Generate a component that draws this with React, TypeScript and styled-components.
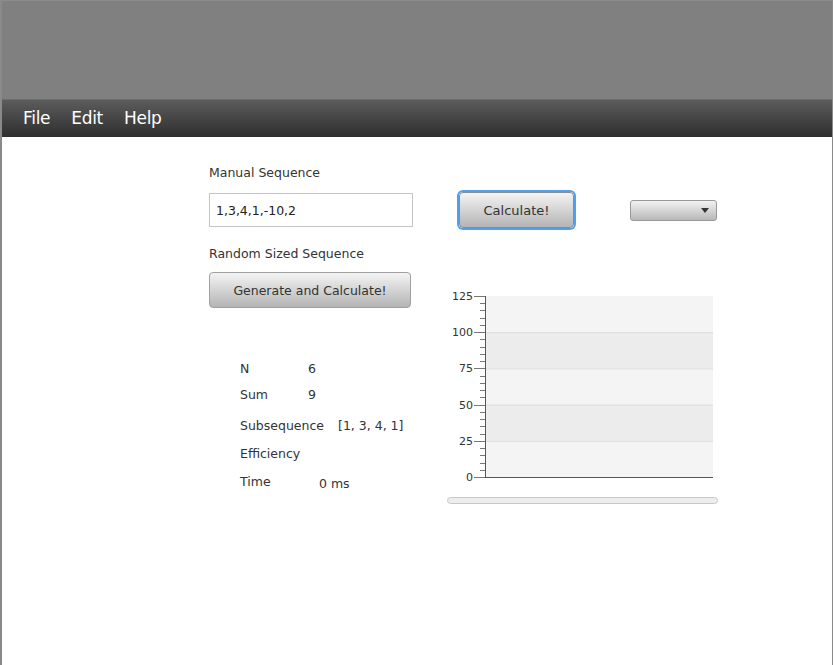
import styled, { createGlobalStyle } from "styled-components";

const GlobalStyle = createGlobalStyle`
  html, body {
    margin: 0;
    padding: 0;
    background: #fff;
  }
  body {
    font-family: "DejaVu Sans", "Liberation Sans", sans-serif;
  }
`;

const stats = [
  { label: "N", value: "6", labelWidth: 68, top: 53 },
  { label: "Sum", value: "9", labelWidth: 68, top: 10 },
  { label: "Subsequence", value: "[1, 3, 4, 1]", labelWidth: 98, top: 15 },
  { label: "Efficiency", value: "", labelWidth: 68, top: 12 },
  { label: "Time", value: "0 ms", labelWidth: 79, top: 12 },
];

const ticks = [125, 100, 75, 50, 25, 0];

export default function App() {
  return (
    <Window>
      <GlobalStyle />
      <TitleArea />
      <MenuBar>
        <MenuItem>File</MenuItem>
        <MenuItem>Edit</MenuItem>
        <MenuItem>Help</MenuItem>
      </MenuBar>
      <Content>
        <LeftColumn>
          <FieldLabel>Manual Sequence</FieldLabel>
          <SequenceInput defaultValue="1,3,4,1,-10,2" />
          <FieldLabel $top={19}>Random Sized Sequence</FieldLabel>
          <GenerateButton>Generate and Calculate!</GenerateButton>
          {stats.map((s) => (
            <StatRow key={s.label} $labelWidth={s.labelWidth} $top={s.top}>
              <span>{s.label}</span>
              <StatValue $shift={s.label === "Time" ? 2 : 0}>{s.value}</StatValue>
            </StatRow>
          ))}
        </LeftColumn>
        <RightColumn>
          <ActionRow>
            <CalcButton>Calculate!</CalcButton>
            <Dropdown>
              <svg width="8" height="5" viewBox="0 0 8 5">
                <path d="M0 0 H8 L4 5 Z" fill="#333" />
              </svg>
            </Dropdown>
          </ActionRow>
          <ChartSvg width="271" height="200" viewBox="0 0 271 200">
            {ticks.slice(0, -1).map((t, i) => (
              <rect
                key={t}
                x={38}
                y={8 + i * 36.2}
                width={228}
                height={36.2}
                fill={i % 2 === 0 ? "#f4f4f4" : "#ececec"}
              />
            ))}
            {ticks.slice(1, -1).map((t, i) => (
              <line
                key={t}
                x1={38}
                x2={266}
                y1={8 + (i + 1) * 36.2 + 0.5}
                y2={8 + (i + 1) * 36.2 + 0.5}
                stroke="#dcdcdc"
              />
            ))}
            {Array.from({ length: 26 }).map((_, i) => {
              const y = Math.round(8 + i * 7.24) + 0.5;
              const major = i % 5 === 0;
              return (
                <line
                  key={i}
                  x1={major ? 27 : 33}
                  x2={38}
                  y1={y}
                  y2={y}
                  stroke="#777"
                />
              );
            })}
            <line x1={38.5} x2={38.5} y1={8} y2={190} stroke="#555" />
            <line x1={38} x2={266} y1={189.5} y2={189.5} stroke="#555" />
            {ticks.map((t, i) => (
              <text
                key={t}
                x={26}
                y={8 + i * 36.2 + 4}
                textAnchor="end"
                fontSize="11"
                fill="#333"
                fontFamily="DejaVu Sans, sans-serif"
              >
                {t}
              </text>
            ))}
          </ChartSvg>
          <ScrollTrack />
        </RightColumn>
      </Content>
    </Window>
  );
}

const Window = styled.div`
  width: 833px;
  height: 665px;
  box-sizing: border-box;
  border-left: 2px solid #8a8a8a;
  border-right: 1px solid #8a8a8a;
  display: flex;
  flex-direction: column;
  background: #fff;
  overflow: hidden;
`;

const TitleArea = styled.div`
  height: 100px;
  flex: none;
  background: #808080;
  border-top: 1px solid #8c8c8c;
  border-bottom: 1px solid #6c6c6c;
  box-sizing: border-box;
`;

const MenuBar = styled.div`
  height: 37px;
  flex: none;
  display: flex;
  align-items: center;
  gap: 21px;
  padding-left: 21px;
  padding-bottom: 2px;
  box-sizing: border-box;
  background: linear-gradient(#5c5c5c, #2e2e2e);
`;

const MenuItem = styled.span`
  font-family: "DejaVu Sans", sans-serif;
  font-size: 17px;
  color: #fff;
  letter-spacing: -0.3px;
`;

const Content = styled.div`
  flex: 1;
  display: flex;
  padding-left: 207px;
`;

const LeftColumn = styled.div`
  width: 238px;
  display: flex;
  flex-direction: column;
  padding-top: 28px;
`;

const FieldLabel = styled.div<{ $top?: number }>`
  font-size: 12.5px;
  line-height: 16px;
  color: #333;
  margin-top: ${(p) => p.$top ?? 0}px;
`;

const SequenceInput = styled.input`
  width: 204px;
  height: 34px;
  box-sizing: border-box;
  margin-top: 12px;
  border: 1px solid #c4c4c4;
  padding: 0 6px;
  font-family: "DejaVu Sans", sans-serif;
  font-size: 12.5px;
  color: #222;
  outline: none;
`;

const GrayButton = styled.button`
  font-family: "DejaVu Sans", sans-serif;
  font-size: 12.5px;
  color: #333;
  border: 1px solid #a0a0a0;
  border-radius: 4px;
  background: linear-gradient(#f4f4f4, #b4b4b4);
  box-sizing: border-box;
  padding: 0;
`;

const GenerateButton = styled(GrayButton)`
  width: 202px;
  height: 36px;
  margin-top: 10px;
`;

const StatRow = styled.div<{ $labelWidth: number; $top: number }>`
  display: grid;
  grid-template-columns: ${(p) => p.$labelWidth}px auto;
  margin-left: 31px;
  margin-top: ${(p) => p.$top}px;
  font-size: 12.5px;
  line-height: 16px;
  color: #333;
`;

const StatValue = styled.span<{ $shift: number }>`
  position: relative;
  top: ${(p) => p.$shift}px;
`;

const RightColumn = styled.div`
  width: 271px;
  display: flex;
  flex-direction: column;
`;

const ActionRow = styled.div`
  display: flex;
  align-items: center;
  margin-top: 55px;
  padding-left: 12px;
  gap: 56px;
`;

const CalcButton = styled(GrayButton)`
  width: 115px;
  height: 36px;
  font-size: 13px;
  border-color: #8c8c8c;
  box-shadow: 0 0 0 2px #4ea1ee;
`;

const Dropdown = styled.div`
  width: 87px;
  height: 21px;
  box-sizing: border-box;
  border: 1px solid #999;
  border-radius: 3px;
  background: linear-gradient(#f2f2f2, #b8b8b8);
  display: flex;
  align-items: center;
  justify-content: flex-end;
  padding-right: 7px;
`;

const ChartSvg = styled.svg`
  display: block;
  margin-top: 60px;
`;

const ScrollTrack = styled.div`
  width: 271px;
  height: 7px;
  box-sizing: border-box;
  margin-top: 9px;
  border: 1px solid #c8c8c8;
  border-radius: 4px;
  background: #ededed;
`;
